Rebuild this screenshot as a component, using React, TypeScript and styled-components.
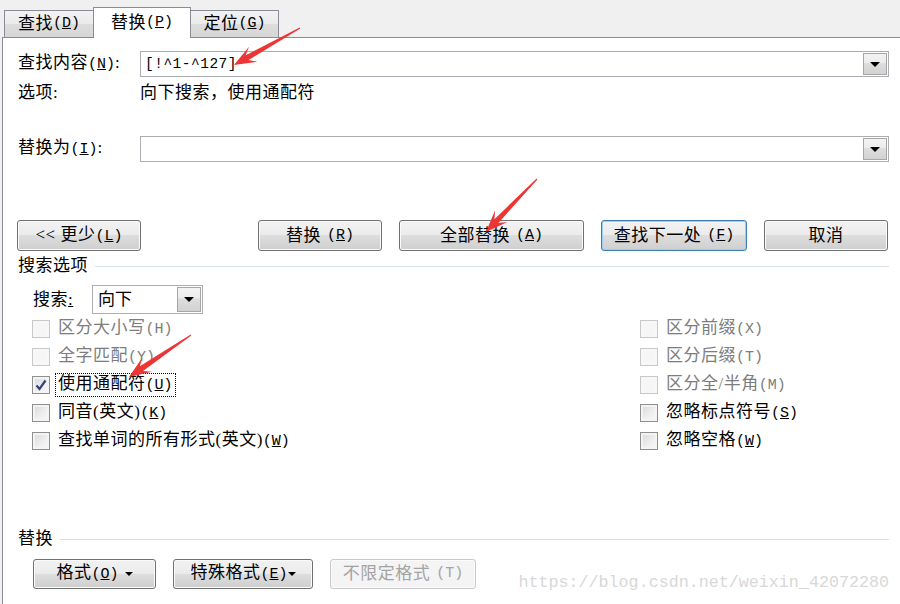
import styled, { createGlobalStyle } from 'styled-components';

const GlobalStyle = createGlobalStyle`
  html, body {
    margin: 0;
    padding: 0;
  }
  body {
    background: #f0f0f0;
    font-family: "Liberation Serif", "Noto Sans CJK SC", serif;
    font-size: 17px;
    line-height: 20px;
    color: #000;
  }
`;

const Window = styled.div`
  position: relative;
  width: 900px;
  height: 604px;
  overflow: hidden;
  display: flex;
  flex-direction: column;
  background: #f0f0f0;
`;

const TabStrip = styled.div`
  display: flex;
  align-items: flex-end;
  height: 37px;
  padding-left: 4px;
`;

const Tab = styled.div<{ $active?: boolean; $width: number }>`
  position: relative;
  z-index: ${(p) => (p.$active ? 2 : 1)};
  width: ${(p) => p.$width}px;
  height: ${(p) => (p.$active ? 31 : 27)}px;
  margin-left: -1px;
  margin-bottom: ${(p) => (p.$active ? -1 : 0)}px;
  box-sizing: border-box;
  border: 1px solid #898c95;
  border-bottom: none;
  display: flex;
  align-items: center;
  justify-content: center;
  letter-spacing: 0.5px;
  background: ${(p) =>
    p.$active ? '#fff' : 'linear-gradient(#f2f2f2 0%, #ebebeb 50%, #dddddd 51%, #d6d6d6 100%)'};
  &:first-child {
    margin-left: 0;
  }
`;

const Panel = styled.div`
  flex: 1;
  margin-left: 2px;
  border-left: 1px solid #898c95;
  border-top: 1px solid #898c95;
  background: #fff;
  padding: 13px 11px 0 15px;
  display: flex;
  flex-direction: column;
`;

const FieldRow = styled.div<{ $top?: number }>`
  display: grid;
  grid-template-columns: 122px 1fr;
  align-items: center;
  margin-top: ${(p) => p.$top ?? 0}px;
  letter-spacing: 0.5px;
`;

const OptionsRow = styled(FieldRow)`
  height: 20px;
`;

const Hot = styled.span`
  font-family: "Liberation Mono", monospace;
  font-size: 15px;
  letter-spacing: 0;
`;

const Combo = styled.div`
  height: 26px;
  box-sizing: border-box;
  border: 1px solid #abadb3;
  display: flex;
  align-items: stretch;
  background: #fff;
`;

const ComboText = styled.div`
  flex: 1;
  display: flex;
  align-items: center;
  padding-left: 4px;
  font-family: "Liberation Mono", monospace;
  font-size: 14.5px;
`;

const DropButton = styled.div`
  width: 24px;
  margin: 1px;
  box-sizing: border-box;
  border: 1px solid #a7a7a7;
  background: linear-gradient(#f3f3f3 0%, #ececec 45%, #dedede 46%, #d2d2d2 100%);
  display: flex;
  align-items: center;
  justify-content: center;
`;

const Triangle = styled.span<{ $size?: number }>`
  width: 0;
  height: 0;
  border-left: ${(p) => p.$size ?? 5}px solid transparent;
  border-right: ${(p) => p.$size ?? 5}px solid transparent;
  border-top: ${(p) => p.$size ?? 5}px solid #000;
`;

const ButtonRow = styled.div<{ $top: number; $indent?: number }>`
  display: flex;
  gap: 17px;
  margin-top: ${(p) => p.$top}px;
  margin-left: ${(p) => p.$indent ?? -1}px;
  padding-right: 1px;
`;

const Spacer = styled.div`
  flex: 1;
`;

const Button = styled.div<{ $width: number; $default?: boolean; $disabled?: boolean; $height?: number }>`
  width: ${(p) => p.$width}px;
  height: ${(p) => p.$height ?? 31}px;
  box-sizing: border-box;
  border: 1px solid ${(p) => (p.$default ? '#3c7fb1' : p.$disabled ? '#c9c9c9' : '#707070')};
  border-radius: 3px;
  box-shadow: ${(p) => (p.$default ? 'inset 0 0 0 1px #9cd0f0' : 'inset 0 0 0 1px #fbfbfb')};
  background: ${(p) =>
    p.$disabled
      ? '#f4f4f4'
      : 'linear-gradient(#f2f2f2 0%, #ebebeb 48%, #dddddd 50%, #cfcfcf 100%)'};
  color: ${(p) => (p.$disabled ? '#a3a3a3' : '#000')};
  display: flex;
  align-items: center;
  justify-content: center;
  gap: 6px;
  letter-spacing: 0.5px;
`;

const SectionHeader = styled.div<{ $top: number }>`
  display: flex;
  align-items: center;
  gap: 7px;
  height: 18px;
  margin-top: ${(p) => p.$top}px;
  letter-spacing: 0.5px;
  &::after {
    content: '';
    flex: 1;
    height: 1px;
    background: #d5dfe5;
  }
`;

const SearchRow = styled.div`
  display: flex;
  align-items: center;
  padding-left: 15px;
  margin-top: 10px;
`;

const SearchLabel = styled.span`
  width: 59px;
  letter-spacing: 0.5px;
`;

const Select = styled(Combo)`
  width: 111px;
  height: 29px;
`;

const SelectText = styled.div`
  flex: 1;
  display: flex;
  align-items: center;
  padding-left: 5px;
`;

const CheckGrid = styled.div`
  display: grid;
  grid-template-columns: 608px 1fr;
  grid-auto-rows: 28px;
  padding-left: 14px;
  margin-top: 1px;
`;

const CheckItem = styled.div<{ $disabled?: boolean }>`
  display: flex;
  align-items: center;
  gap: 8px;
  color: ${(p) => (p.$disabled ? '#7d7d7d' : '#000')};
  letter-spacing: 0.5px;
`;

const Box = styled.span<{ $disabled?: boolean }>`
  width: 18px;
  height: 18px;
  box-sizing: border-box;
  border: 1px solid ${(p) => (p.$disabled ? '#c8c8c8' : '#8e8f8f')};
  background: ${(p) =>
    p.$disabled ? '#f6f6f6' : 'linear-gradient(135deg, #d6d6d6 0%, #ececec 50%, #fbfbfb 100%)'};
  box-shadow: inset 0 0 0 2px ${(p) => (p.$disabled ? '#f8f8f8' : '#f4f4f4')};
  display: flex;
  align-items: center;
  justify-content: center;
`;

const CheckText = styled.span<{ $focused?: boolean }>`
  padding: 0 2px;
  margin-left: -2px;
  outline: ${(p) => (p.$focused ? '1px dotted #000' : 'none')};
`;

const Watermark = styled.div`
  position: absolute;
  right: 11px;
  top: 573px;
  font-family: "Liberation Mono", monospace;
  font-size: 16.7px;
  color: #d8d8d8;
  letter-spacing: 0;
`;

const Overlay = styled.svg`
  position: absolute;
  inset: 0;
  pointer-events: none;
`;

const hot = (key: string) => (
  <Hot>
    (<u>{key}</u>)
  </Hot>
);

type Check = { label: string; key: string; disabled?: boolean; checked?: boolean; focused?: boolean };

const leftChecks: Check[] = [
  { label: '区分大小写', key: 'H', disabled: true },
  { label: '全字匹配', key: 'Y', disabled: true },
  { label: '使用通配符', key: 'U', checked: true, focused: true },
  { label: '同音(英文)', key: 'K' },
  { label: '查找单词的所有形式(英文)', key: 'W' },
];

const rightChecks: Check[] = [
  { label: '区分前缀', key: 'X', disabled: true },
  { label: '区分后缀', key: 'T', disabled: true },
  { label: '区分全/半角', key: 'M', disabled: true },
  { label: '忽略标点符号', key: 'S' },
  { label: '忽略空格', key: 'W' },
];

const CheckRow = ({ item }: { item: Check }) => (
  <CheckItem $disabled={item.disabled}>
    <Box $disabled={item.disabled}>
      {item.checked && (
        <svg width="12" height="12" viewBox="0 0 12 12">
          <path d="M1.5 6.5 L4.5 10 L10.5 1.5" fill="none" stroke="#34427a" strokeWidth="2.2" />
        </svg>
      )}
    </Box>
    <CheckText $focused={item.focused}>
      {item.label}
      {item.disabled ? <Hot>({item.key})</Hot> : hot(item.key)}
    </CheckText>
  </CheckItem>
);

const arrowPoints = (tx: number, ty: number, hx: number, hy: number) => {
  const len = Math.hypot(hx - tx, hy - ty);
  const dx = (hx - tx) / len;
  const dy = (hy - ty) / len;
  const nx = -dy;
  const ny = dx;
  const at = (back: number, side: number) =>
    `${(hx - dx * back + nx * side).toFixed(1)},${(hy - dy * back + ny * side).toFixed(1)}`;
  return [
    at(len, 0.6),
    at(15, 2.8),
    at(22, 8.5),
    at(0, 0),
    at(22, -8.5),
    at(15, -2.8),
    at(len, -0.6),
  ].join(' ');
};

const arrows = [
  [300, 28, 234, 65],
  [537, 179, 486, 232],
  [191, 335, 129, 377],
];

const App = () => {
  const rows = leftChecks.flatMap((l, i) => [l, rightChecks[i]]);

  return (
    <Window>
      <GlobalStyle />
      <TabStrip>
        <Tab $width={90}>查找{hot('D')}</Tab>
        <Tab $width={98} $active>
          替换{hot('P')}
        </Tab>
        <Tab $width={89}>定位{hot('G')}</Tab>
      </TabStrip>
      <Panel>
        <FieldRow>
          <span>查找内容{hot('N')}:</span>
          <Combo>
            <ComboText>[!^1-^127]</ComboText>
            <DropButton>
              <Triangle />
            </DropButton>
          </Combo>
        </FieldRow>
        <OptionsRow $top={6}>
          <span>选项:</span>
          <span>向下搜索，使用通配符</span>
        </OptionsRow>
        <FieldRow $top={33}>
          <span>替换为{hot('I')}:</span>
          <Combo>
            <ComboText />
            <DropButton>
              <Triangle />
            </DropButton>
          </Combo>
        </FieldRow>

        <ButtonRow $top={58}>
          <Button $width={124}>
            <span>&lt;&lt; 更少{hot('L')}</span>
          </Button>
          <Spacer />
          <Button $width={124}>替换{hot('R')}</Button>
          <Button $width={185}>全部替换{hot('A')}</Button>
          <Button $width={146} $default>
            查找下一处{hot('F')}
          </Button>
          <Button $width={124}>取消</Button>
        </ButtonRow>

        <SectionHeader $top={6}>搜索选项</SectionHeader>
        <SearchRow>
          <SearchLabel>
            搜索<u>:</u>
          </SearchLabel>
          <Select>
            <SelectText>向下</SelectText>
            <DropButton>
              <Triangle />
            </DropButton>
          </Select>
        </SearchRow>
        <CheckGrid>
          {rows.map((item, i) => (
            <CheckRow key={i} item={item} />
          ))}
        </CheckGrid>

        <SectionHeader $top={75}>替换</SectionHeader>
        <ButtonRow $top={11} $indent={15}>
          <Button $width={123} $height={30}>
            <span>格式{hot('O')}</span>
            <Triangle $size={4} />
          </Button>
          <Button $width={140} $height={30}>
            <span>特殊格式{hot('E')}</span>
            <Triangle $size={4} style={{ marginLeft: -6 }} />
          </Button>
          <Button $width={146} $height={30} $disabled>
            不限定格式<Hot>(T)</Hot>
          </Button>
        </ButtonRow>
      </Panel>

      <Watermark>https://blog.csdn.net/weixin_42072280</Watermark>
      <Overlay width="900" height="604" viewBox="0 0 900 604">
        {arrows.map(([tx, ty, hx, hy], i) => (
          <polygon key={i} points={arrowPoints(tx, ty, hx, hy)} fill="#ec3535" />
        ))}
      </Overlay>
    </Window>
  );
};

export default App;
